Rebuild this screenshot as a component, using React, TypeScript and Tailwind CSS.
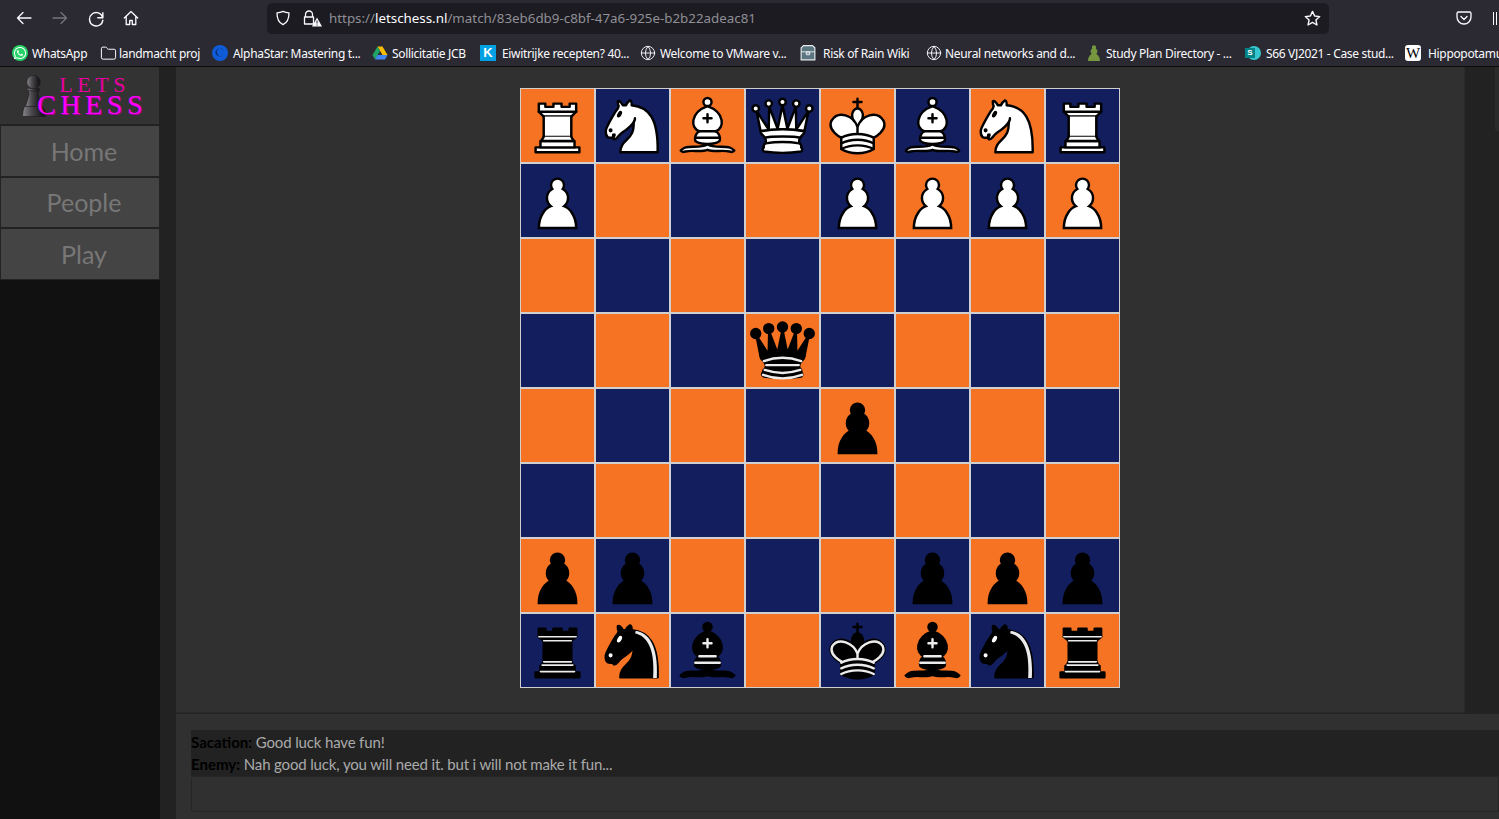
import { type ReactNode } from "react";
import { FaWhatsapp } from "react-icons/fa";
import { Folder, Globe } from "lucide-react";

const board = [
  "RNBQKBNR",
  "P...PPPP",
  "........",
  "...q....",
  "....p...",
  "........",
  "pp...ppp",
  "rnb.kbnr",
];

const bishopBody = (
  <>
    <path d="M9 36c3.39-.97 10.11.43 13.5-2 3.39 2.43 10.11 1.03 13.5 2 0 0 1.65.54 3 2-.68.97-1.65.99-3 .5-3.39-.97-10.11.46-13.5-1-3.39 1.46-10.11.03-13.5 1-1.35.49-2.32.47-3-.5 1.35-1.46 3-2 3-2z" />
    <path d="M15 32c2.5 2.5 12.5 2.5 15 0 .5-1.5 0-2 0-2 0-2.5-2.5-4-2.5-4 5.5-1.5 6-11.5-5-15.5-11 4-10.5 14-5 15.5 0 0-2.5 1.5-2.5 4 0 0-.5.5 0 2z" />
    <circle cx="22.5" cy="8" r="2.5" />
  </>
);

const queenCrown =
  "M9 26c8.5-1.5 21-1.5 27 0l2.5-12.5L31 25l-.3-14.1-5.2 13.6-3-14.5-3 14.5-5.2-13.6L14 25 6.5 13.5 9 26z";
const kingHead =
  "M22.5 25s4.5-7.5 3-10.5c0 0-1-2.5-3-2.5s-3 2.5-3 2.5c-1.5 3 3 10.5 3 10.5";
const kingBody =
  "M12.5 37c5.5 3.5 14.5 3.5 20 0v-7s9-4.5 6-10.5c-4-6.5-13.5-3.5-16 4V27v-3.5c-2.5-7.5-12-10.5-16-4-3 6 6 10.5 6 10.5v7";
const knightBack = "M22 10c10.5 1 16.5 8 16 29H15c0-9 10-6.5 8-21";
const knightHead =
  "M24 18c.38 2.91-5.55 7.37-8 9-3 2-2.82 4.34-5 4-1.04-.94 1.41-3.04 0-3-1 0 .19 1.23-1 2-1 0-4 1-4-4 0-2 6-12 6-12s1.89-1.9 2-3.5c-.73-.99-.5-2-.5-3 1-1 3 2.5 3 2.5h2s.78-1.99 2.5-3c1 0 1 3 1 3";
const pawnShape =
  "M22.5 9c-2.21 0-4 1.79-4 4 0 .89.29 1.71.78 2.38C17.33 16.5 16 18.59 16 21c0 2.03.94 3.84 2.41 5.03-3 1.06-7.41 5.55-7.41 13.47h23c0-7.92-4.41-12.41-7.41-13.47 1.47-1.19 2.41-3 2.41-5.03 0-2.41-1.33-4.5-3.28-5.62.49-.67.78-1.49.78-2.38 0-2.21-1.79-4-4-4z";

const pieces: Record<string, ReactNode> = {
  P: <path d={pawnShape} fill="#fff" stroke="#000" strokeWidth="1.5" strokeLinecap="round" />,
  p: <path d={pawnShape} fill="#000" stroke="#000" strokeWidth="1.5" strokeLinecap="round" />,
  R: (
    <g fill="#fff" stroke="#000" strokeWidth="1.5" strokeLinecap="round" strokeLinejoin="round">
      <path d="M9 39h27v-3H9v3z" />
      <path d="M12 36v-4h21v4H12z" />
      <path d="M11 14V9h4v2h5V9h5v2h5V9h4v5" />
      <path d="M34 14l-3 3H14l-3-3" />
      <path d="M31 17v12.5H14V17" />
      <path d="M31 29.5l1.5 2.5h-20l1.5-2.5" />
      <path d="M11 14h23" fill="none" />
    </g>
  ),
  r: (
    <g fill="#000" stroke="#000" strokeWidth="1.5" strokeLinecap="round" strokeLinejoin="round">
      <path d="M9 39h27v-3H9v3z" />
      <path d="M12.5 32l1.5-2.5h17l1.5 2.5h-20z" />
      <path d="M12 36v-4h21v4H12z" />
      <path d="M14 29.5v-13h17v13H14z" />
      <path d="M14 16.5L11 14h23l-3 2.5H14z" />
      <path d="M11 14V9h4v2h5V9h5v2h5V9h4v5H11z" />
      <g fill="none" stroke="#ececec" strokeWidth="1">
        <path d="M12 35.5h21" />
        <path d="M13 31.5h19" />
        <path d="M14 29.5h17" />
        <path d="M14 16.5h17" />
        <path d="M11 14h23" />
      </g>
    </g>
  ),
  N: (
    <g fill="#fff" stroke="#000" strokeWidth="1.5" strokeLinecap="round" strokeLinejoin="round">
      <path d={knightBack} />
      <path d={knightHead} />
      <circle cx="9" cy="25.5" r="0.5" fill="#000" />
      <ellipse cx="14.5" cy="15.5" rx="0.5" ry="1.5" fill="#000" transform="rotate(30 14.5 15.5)" />
    </g>
  ),
  n: (
    <g fill="#000" stroke="#000" strokeWidth="1.5" strokeLinecap="round" strokeLinejoin="round">
      <path d={knightBack} />
      <path d={knightHead} />
      <circle cx="9" cy="25.5" r="0.5" fill="#fff" stroke="#fff" />
      <ellipse cx="14.5" cy="15.5" rx="0.5" ry="1.5" fill="#fff" stroke="#fff" transform="rotate(30 14.5 15.5)" />
      <path
        d="M24.55 10.4l-.45 1.45.5.15c3.15 1 5.65 2.49 7.9 6.75S35.75 29.06 35.25 39l-.05.5h2.25l.05-.5c.5-10.06-.88-16.85-3.25-21.34-2.37-4.49-5.79-6.64-9.19-7.16l-.51-.1z"
        fill="#ececec"
        stroke="none"
      />
    </g>
  ),
  B: (
    <g stroke="#000" strokeWidth="1.5" strokeLinecap="round" strokeLinejoin="round">
      <g fill="#fff">{bishopBody}</g>
      <path d="M17.5 26h10M15 30h15M22.5 15.5v5M20 18h5" fill="none" />
    </g>
  ),
  b: (
    <g stroke="#000" strokeWidth="1.5" strokeLinecap="round" strokeLinejoin="round">
      <g fill="#000">{bishopBody}</g>
      <path d="M17.5 26h10M15 30h15M22.5 15.5v5M20 18h5" fill="none" stroke="#ececec" />
    </g>
  ),
  Q: (
    <g fill="#fff" stroke="#000" strokeWidth="1.5" strokeLinejoin="round">
      <path d={queenCrown} />
      <path d="M9 26c0 2 1.5 2 2.5 4 1 1.5 1 1 .5 3.5-1.5 1-1 2.5-1 2.5-1.5 1.5 0 2.5 0 2.5 6.5 1 16.5 1 23 0 0 0 1.5-1 0-2.5 0 0 .5-1.5-1-2.5-.5-2.5-.5-2 .5-3.5 1-2 2.5-2 2.5-4-8.5-1.5-18.5-1.5-27 0z" />
      <path d="M11.5 30c3.5-1 18.5-1 22 0" fill="none" />
      <path d="M12 33.5c6-1 15-1 21 0" fill="none" />
      <circle cx="6" cy="12" r="2" />
      <circle cx="14" cy="9" r="2" />
      <circle cx="22.5" cy="8" r="2" />
      <circle cx="31" cy="9" r="2" />
      <circle cx="39" cy="12" r="2" />
    </g>
  ),
  q: (
    <g fill="#000" stroke="#000" strokeWidth="1.5" strokeLinejoin="round" strokeLinecap="round">
      <circle cx="6" cy="12" r="2.75" />
      <circle cx="14" cy="9" r="2.75" />
      <circle cx="22.5" cy="8" r="2.75" />
      <circle cx="31" cy="9" r="2.75" />
      <circle cx="39" cy="12" r="2.75" />
      <path d={queenCrown} />
      <path d="M9 26c0 2 1.5 2 2.5 4 1 1.5 1 1 .5 3.5-1.5 1-1.5 2.5-1.5 2.5-1.5 1.5.5 2.5.5 2.5 6.5 1 16.5 1 23 0 0 0 1.5-1 0-2.5 0 0 .5-1.5-1-2.5-.5-2.5-.5-2 .5-3.5 1-2 2.5-2 2.5-4-8.5-1.5-18.5-1.5-27 0z" />
      <g fill="none" stroke="#ececec">
        <path d="M11 29a35 35 0 0 1 23 0" />
        <path d="M12.5 31.5h20" />
        <path d="M11.5 34.5a35 35 0 0 0 22 0" />
        <path d="M10.5 37.5a35 35 0 0 0 24 0" />
      </g>
    </g>
  ),
  K: (
    <g fill="none" stroke="#000" strokeWidth="1.5" strokeLinecap="round" strokeLinejoin="round">
      <path d="M22.5 11.63V6M20 8h5" />
      <path d={kingHead} fill="#fff" />
      <path d={kingBody} fill="#fff" />
      <path d="M12.5 30c5.5-3 14.5-3 20 0M12.5 33.5c5.5-3 14.5-3 20 0M12.5 37c5.5-3 14.5-3 20 0" />
    </g>
  ),
  k: (
    <g fill="none" stroke="#000" strokeWidth="1.5" strokeLinecap="round" strokeLinejoin="round">
      <path d="M22.5 11.63V6M20 8h5" />
      <path d={kingHead} fill="#000" />
      <path d={kingBody} fill="#000" />
      <path
        d="M32 29.5s8.5-4 6.03-9.65C34.15 14 25 18 22.5 24.5v2.1-2.1C20 18 10.85 14 6.97 19.85 4.5 25.5 13 29.5 13 29.5"
        stroke="#ececec"
      />
      <path
        d="M12.5 30c5.5-3 14.5-3 20 0M12.5 33.5c5.5-3 14.5-3 20 0M12.5 37c5.5-3 14.5-3 20 0"
        stroke="#ececec"
      />
    </g>
  ),
};

function Piece({ code }: { code: string }) {
  return (
    <svg viewBox="0 0 45 45" className="size-full blur-[0.35px]">
      {pieces[code]}
    </svg>
  );
}

function ToolIcon({ children, className }: { children: ReactNode; className?: string }) {
  return (
    <svg
      viewBox="0 0 16 16"
      fill="none"
      stroke="currentColor"
      strokeWidth="1.3"
      strokeLinecap="round"
      strokeLinejoin="round"
      className={className ?? "size-4 text-[#fbfbfe]"}
    >
      {children}
    </svg>
  );
}

function Bookmark({
  icon,
  label,
  width,
  gap = "ml-1",
}: {
  icon: ReactNode;
  label: string;
  width: string;
  gap?: string;
}) {
  return (
    <div className={`flex shrink-0 items-center ${width}`}>
      <span className="flex size-4 shrink-0 items-center justify-center">{icon}</span>
      <span
        className={`${gap} whitespace-nowrap pt-px font-['Noto_Sans',sans-serif] text-xs tracking-[-0.33px] text-[#fbfbfe]`}
      >
        {label}
      </span>
    </div>
  );
}

const globe = <Globe size={16} strokeWidth={1.4} className="text-[#fbfbfe]" />;

function Toolbar() {
  return (
    <div className="flex h-[36px] shrink-0 items-center bg-[#2b2a33]">
      <div className="ml-4 flex w-[251px] items-center">
        <ToolIcon>
          <path d="M15 8H1.500M7 2.500 1.500 8 7 13.500" />
        </ToolIcon>
        <ToolIcon className="ml-5 size-4 text-[#75747b]">
          <path d="M1 8h13.500M9 2.500 14.500 8 9 13.500" />
        </ToolIcon>
        <ToolIcon className="ml-5 size-[17px] text-[#fbfbfe]">
          <path d="M14 2.500v4.800H9.200M13.800 7A6.300 6.300 0 1 0 14 9.500" />
        </ToolIcon>
        <ToolIcon className="ml-[18px] size-4 text-[#fbfbfe]">
          <path d="M1.300 8 8 1.500 14.700 8M3.200 6.500v8h3.500v-4h2.600v4h3.500v-8" />
        </ToolIcon>
      </div>
      <div className="flex h-[31px] w-[1062px] items-center rounded-[5px] bg-[#1c1b22] px-2">
        <ToolIcon>
          <path d="M8 1.400c2 1 4 1.400 6 1.500 0 6-1.600 9.700-6 11.700C3.600 12.600 2 8.900 2 2.900c2-.1 4-.5 6-1.500z" />
        </ToolIcon>
        <span className="relative ml-[11px] flex size-4">
          <ToolIcon>
            <path d="M3.500 7V4.500a3.500 3.500 0 0 1 7 0V7M2.500 7h9v7h-9z" />
          </ToolIcon>
          <svg viewBox="0 0 10 9" className="absolute -bottom-px -right-1 size-[10px]">
            <path d="M5 0 10 9H0z" fill="#fbfbfe" />
            <path d="M5 3v3M5 7v1" stroke="#1c1b22" strokeWidth="1" />
          </svg>
        </span>
        <span className="ml-[11px] whitespace-nowrap pt-px font-['Noto_Sans',sans-serif] text-[13.35px] text-[#8f8f94]">
          https://<span className="text-[#fbfbfe]">letschess.nl</span>
          /match/83eb6db9-c8bf-47a6-925e-b2b22adeac81
        </span>
        <ToolIcon className="ml-auto size-[17px] text-[#fbfbfe]">
          <path d="m8 1.300 2 4.400 4.800.5-3.600 3.200 1 4.700L8 11.700l-4.200 2.400 1-4.700L1.200 6.200 6 5.700z" />
        </ToolIcon>
      </div>
      <ToolIcon className="ml-[127px] size-4 text-[#fbfbfe]">
        <path d="M2.500 2h11A1.500 1.500 0 0 1 15 3.500V7A7 7 0 0 1 1 7V3.500A1.500 1.500 0 0 1 2.500 2z" />
        <path d="m5 6.500 3 3 3-3" />
      </ToolIcon>
      <div className="ml-[21px] h-[13px] w-[4px] shrink-0 border-l border-r border-[#fbfbfe]" />
    </div>
  );
}

function Bookmarks() {
  return (
    <div className="flex h-[30px] shrink-0 items-center overflow-hidden bg-[#2b2a33] pl-3 pt-1">
      <Bookmark
        width="w-[88px]"
        label="WhatsApp"
        icon={
          <span className="flex size-4 items-center justify-center rounded-full bg-[#25d366]">
            <FaWhatsapp size={14} className="text-white" />
          </span>
        }
      />
      <Bookmark
        width="w-[112px]"
        gap="ml-[3px]"
        label="landmacht proj"
        icon={<Folder size={17} strokeWidth={1.4} className="shrink-0 text-[#fbfbfe]" />}
      />
      <Bookmark
        width="w-[160px]"
        gap="ml-[5px]"
        label="AlphaStar: Mastering t..."
        icon={
          <svg viewBox="0 0 16 16" className="size-4">
            <circle cx="8" cy="8" r="8" fill="#0f5bd8" />
            <path d="M3.500 8a4.500 4.500 0 0 1 8-2.800A3.500 3.500 0 0 0 5.500 9 3 3 0 0 0 11 10a4.500 4.500 0 0 1-7.500-2z" fill="#0b2a66" />
          </svg>
        }
      />
      <Bookmark
        width="w-[108px]"
        label="Sollicitatie JCB"
        icon={
          <svg viewBox="0 0 16 16" className="size-4">
            <path d="M5.500 1.500h5L15.500 10h-5z" fill="#fbbc04" />
            <path d="M5.500 1.500 .5 10 3 14.500 8 6z" fill="#1fa463" />
            <path d="M3 14.500h10l2.500-4.500h-10z" fill="#4285f4" />
          </svg>
        }
      />
      <Bookmark
        width="w-[160px]"
        gap="ml-1.5"
        label="Eiwitrijke recepten? 40..."
        icon={
          <span className="flex size-4 items-center justify-center bg-[#00a0e2] font-['Liberation_Sans',sans-serif] text-[13px] font-bold text-white">
            K
          </span>
        }
      />
      <Bookmark width="w-[160px]" label="Welcome to VMware v..." icon={globe} />
      <Bookmark
        width="w-[126px]"
        gap="ml-[7px]"
        label="Risk of Rain Wiki"
        icon={
          <svg viewBox="1 1 14 14" className="size-4">
            <path d="M2 3.500 4 1.500h8l2 2V14H2z" fill="#5c7680" stroke="#e8eef0" strokeWidth="1" />
            <path d="M2 7h12M6.500 7h3v2.500h-3z" fill="#8aa0a8" stroke="#e8eef0" strokeWidth="0.8" />
          </svg>
        }
      />
      <Bookmark width="w-[160px]" gap="ml-[3px]" label="Neural networks and d..." icon={globe} />
      <Bookmark
        width="w-[159px]"
        label="Study Plan Directory - ..."
        icon={
          <svg viewBox="9 7 27 34" className="h-[18px] w-[14px] shrink-0">
            <path d={pawnShape} fill="#76973f" />
          </svg>
        }
      />
      <Bookmark
        width="w-[160px]"
        gap="ml-[5px]"
        label="S66 VJ2021 - Case stud..."
        icon={
          <span className="relative flex size-4">
            <span className="absolute right-0 top-px size-[14px] rounded-full bg-[#37c6d0]" />
            <span className="absolute left-0 top-[3px] flex size-[10px] items-center justify-center bg-[#038387] font-['Liberation_Sans',sans-serif] text-[8px] font-bold text-white">
              S
            </span>
          </span>
        }
      />
      <Bookmark
        width="w-[120px]"
        gap="ml-[7px]"
        label="Hippopotamus"
        icon={
          <span className="flex size-4 items-center justify-center rounded-[3px] bg-white font-['Liberation_Serif',serif] text-[15px] text-black">
            W
          </span>
        }
      />
    </div>
  );
}

function Logo() {
  return (
    <div className="flex h-[57px] items-center bg-[#333] pl-[22px]">
      <svg viewBox="0 0 24 42" className="h-[42px] w-[24px] shrink-0">
        <defs>
          <linearGradient id="pawn" x1="0" x2="1" y1="0" y2="0">
            <stop offset="0" stopColor="#8a878c" />
            <stop offset="0.4" stopColor="#4a474c" />
            <stop offset="0.75" stopColor="#242225" />
            <stop offset="1" stopColor="#141214" />
          </linearGradient>
        </defs>
        <g fill="url(#pawn)" stroke="#1b191c" strokeWidth="0.6">
          <path d="M2.500 31h18l2.500 5 .5 5.500H.5L1 36z" />
          <path d="M6 15h11l-1 4 3.500 12.500h-16L7 19z" />
          <ellipse cx="11.500" cy="14.500" rx="6.500" ry="1.600" />
          <circle cx="11.500" cy="7" r="6.800" />
        </g>
      </svg>
      <div className="-ml-[9px] flex flex-col items-end font-['Liberation_Serif',serif]">
        <span className="mr-[17px] text-[22px] leading-[18px] tracking-[4.6px] text-[#e600a0]">LETS</span>
        <span className="text-[28px] leading-[22px] tracking-[4.6px] text-[#ff00ff] [text-shadow:1px_1px_0_#a8009c]">
          CHESS
        </span>
      </div>
    </div>
  );
}

function Sidebar() {
  const navBase =
    "flex items-center justify-center bg-[#444] pl-2 pt-px font-['Lato',sans-serif] text-[25px] text-[#777]";

  return (
    <aside className="flex w-[160px] shrink-0 flex-col bg-[#111]">
      <div className="flex flex-col gap-[2px] bg-[#222] pb-px pr-px">
        <Logo />
        <div className={`ml-px h-[50px] ${navBase}`}>Home</div>
        <div className={`ml-px h-[49px] ${navBase}`}>People</div>
        <div className={`ml-px h-[50px] ${navBase}`}>Play</div>
      </div>
    </aside>
  );
}

function Board() {
  return (
    <div className="grid h-[600px] w-[600px] grid-cols-8 grid-rows-8">
      {board.flatMap((row, r) =>
        row.split("").map((code, c) => (
          <div
            key={`${r}-${c}`}
            className={
              (r + c) % 2 === 0
                ? "border border-[#d0d0d0] bg-[#f57322]"
                : "border border-[#d0d0d0] bg-[#121e5e]"
            }
          >
            {code !== "." && <Piece code={code} />}
          </div>
        )),
      )}
    </div>
  );
}

function Chat() {
  return (
    <section className="mt-px flex-1 bg-[#303030] pl-[15px] pt-[16px] font-['Lato',sans-serif] text-[15px] tracking-[-0.15px] text-[#aaa]">
      <div className="h-[46px] bg-[#222] leading-[22px]">
        <p className="h-[23px] pt-px">
          <b className="font-bold tracking-normal text-black">Sacation:</b> Good luck have fun!
        </p>
        <p>
          <b className="font-bold tracking-normal text-black">Enemy:</b> Nah good luck, you will need it. but i will not make it fun...
        </p>
      </div>
      <div className="h-[36px] rounded-l-[3px] border border-[#252525] bg-[#303030]" />
    </section>
  );
}

export default function App() {
  return (
    <div className="flex h-[819px] w-[1499px] flex-col overflow-hidden bg-[#222]">
      <Toolbar />
      <Bookmarks />
      <div className="h-px shrink-0 bg-[#0b0b0e]" />
      <div className="flex min-h-0 flex-1">
        <Sidebar />
        <main className="ml-4 flex min-w-0 flex-1 flex-col">
          <div className="flex h-[646px] shrink-0">
            <div className="flex w-[1289px] justify-center border-b border-r border-[#2a2a2a] bg-[#303030] pt-[21px]">
              <Board />
            </div>
            <div className="ml-[30px] h-[64px] flex-1 rounded-bl-[3px] bg-[#2b2b2b]" />
          </div>
          <Chat />
        </main>
      </div>
    </div>
  );
}
